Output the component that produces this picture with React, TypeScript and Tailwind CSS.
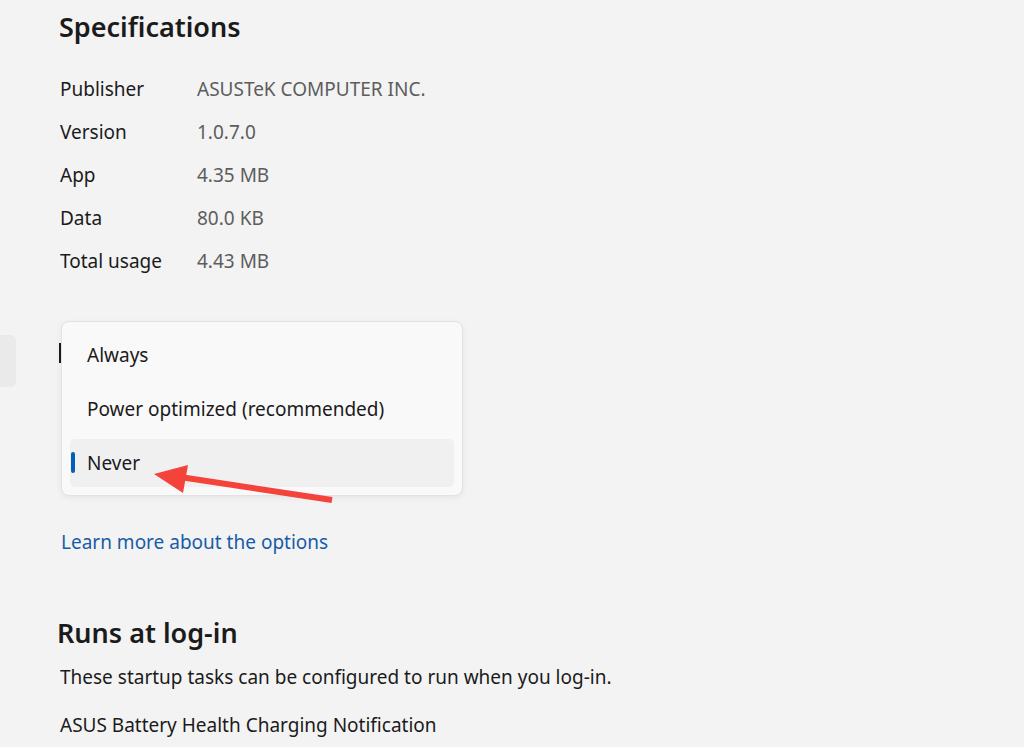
import React from "react";

const specs = [
  { label: "Publisher", value: "ASUSTeK COMPUTER INC." },
  { label: "Version", value: "1.0.7.0" },
  { label: "App", value: "4.35 MB" },
  { label: "Data", value: "80.0 KB" },
  { label: "Total usage", value: "4.43 MB" },
];

const options = [
  { name: "Always", selected: false },
  { name: "Power optimized (recommended)", selected: false },
  { name: "Never", selected: true },
];

export default function App() {
  return (
    <div
      className="relative w-[1024px] h-[747px] overflow-hidden bg-[#f3f3f3] text-[#1b1b1b] flex"
      style={{ fontFamily: '"Noto Sans", "Open Sans", sans-serif' }}
    >
      {/* edge of the nav pane, mostly scrolled off */}
      <div className="w-[16px] shrink-0">
        <div className="mt-[335px] h-[52px] w-[16px] rounded-r-[6px] bg-[#eaeaea]" />
      </div>

      <div className="pl-[44px] pt-[9px] flex flex-col">
        <h2 className="-ml-[1px] text-[27px] leading-[36px] font-semibold">Specifications</h2>

        <div className="mt-[23px] flex flex-col">
          {specs.map((s) => (
            <div key={s.label} className="flex text-[19px] leading-[43px]">
              <span className="w-[137px]">{s.label}</span>
              <span className="text-[#5d5d5d]">{s.value}</span>
            </div>
          ))}
        </div>

        <div className="relative mt-[38px] pl-[1px]">
          {/* the combobox underneath the open list */}
          <div className="absolute -left-[1px] top-[22px] w-[3px] h-[20px] bg-[#1b1b1b]" />
          <div className="relative w-[402px] h-[175px] rounded-[8px] border border-[#e2e2e2] bg-[#f9f9f9] shadow-[0_2px_6px_rgba(0,0,0,0.06)] pt-[9px] pb-[8px] px-[8px] flex flex-col gap-[6px]">
            {options.map((o) => (
              <div
                key={o.name}
                className={`relative h-[48px] rounded-[5px] pl-[17px] text-[19px] leading-[48px] ${o.selected ? "bg-[#f0f0f0]" : ""}`}
              >
                {o.selected && (
                  <span className="absolute left-[1px] top-[13px] w-[4px] h-[21px] rounded-full bg-[#005fb8]" />
                )}
                {o.name}
              </div>
            ))}
          </div>
        </div>

        <a className="mt-[32px] ml-[1px] text-[19px] leading-[28px] text-[#175ca8]">Learn more about the options</a>

        <h2 className="mt-[59px] -ml-[3px] text-[27px] leading-[36px] font-semibold">Runs at log-in</h2>
        <p className="mt-[12px] text-[19px] leading-[28px]">
          These startup tasks can be configured to run when you log-in.
        </p>
        <p className="mt-[20px] text-[19px] leading-[28px]">ASUS Battery Health Charging Notification</p>
      </div>

      {/* annotation arrow */}
      <svg className="absolute inset-0 pointer-events-none" width="1024" height="747" viewBox="0 0 1024 747">
        <line x1="180" y1="477" x2="332" y2="500" stroke="#f4433b" strokeWidth="6" />
        <polygon points="154,474 188,465 183,493" fill="#f4433b" />
      </svg>
    </div>
  );
}
